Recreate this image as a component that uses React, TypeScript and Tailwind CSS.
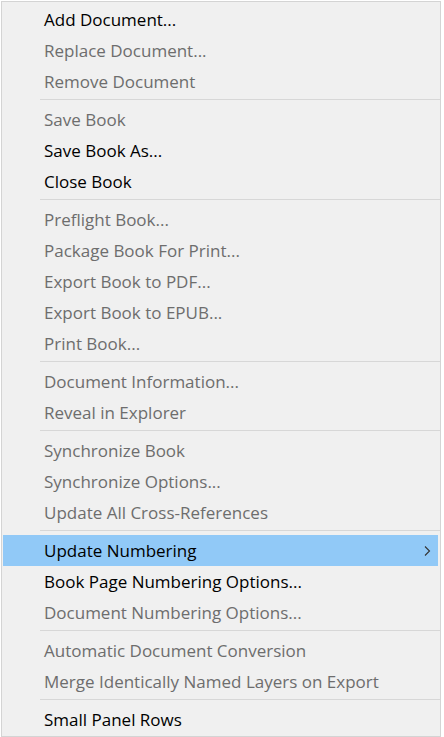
type Item = { label: string; enabled?: boolean; active?: boolean; submenu?: boolean };

const groups: Item[][] = [
  [
    { label: "Add Document...", enabled: true },
    { label: "Replace Document..." },
    { label: "Remove Document" },
  ],
  [
    { label: "Save Book" },
    { label: "Save Book As...", enabled: true },
    { label: "Close Book", enabled: true },
  ],
  [
    { label: "Preflight Book..." },
    { label: "Package Book For Print..." },
    { label: "Export Book to PDF..." },
    { label: "Export Book to EPUB..." },
    { label: "Print Book..." },
  ],
  [{ label: "Document Information..." }, { label: "Reveal in Explorer" }],
  [
    { label: "Synchronize Book" },
    { label: "Synchronize Options..." },
    { label: "Update All Cross-References" },
  ],
  [
    { label: "Update Numbering", enabled: true, active: true, submenu: true },
    { label: "Book Page Numbering Options...", enabled: true },
    { label: "Document Numbering Options..." },
  ],
  [
    { label: "Automatic Document Conversion" },
    { label: "Merge Identically Named Layers on Export" },
  ],
  [{ label: "Small Panel Rows", enabled: true }],
];

function MenuRow({ item }: { item: Item }) {
  return (
    <div
      className={`mx-[1px] mr-[2px] flex h-[31px] items-center pl-[41px] pr-[7px] ${
        item.active ? "bg-[#91c9f7]" : ""
      }`}
    >
      <span className={`flex-1 ${item.enabled ? "text-black" : "text-[#6d6d6d]"}`}>{item.label}</span>
      {item.submenu && (
        <svg width="8" height="12" viewBox="0 0 8 12">
          <path d="M2 1.5 L6.5 6 L2 10.5" fill="none" stroke="#333" strokeWidth="1.1" />
        </svg>
      )}
    </div>
  );
}

export default function App() {
  return (
    <div className="h-[737px] w-[444px] bg-white pl-[1px] pt-[1px]">
      <div
        className="h-[736px] w-[440px] border border-[#d4d4d4] bg-[#f0f0f0] pt-[2px] text-[17px] leading-none"
        style={{ fontFamily: '"Segoe UI", "Open Sans", sans-serif' }}
      >
        {groups.map((group, gi) => (
          <div key={gi}>
            {gi > 0 && <div className="ml-[38px] mb-[4px] mt-[2px] h-px bg-[#d7d7d7]" />}
            {group.map((item) => (
              <MenuRow key={item.label} item={item} />
            ))}
          </div>
        ))}
      </div>
    </div>
  );
}
